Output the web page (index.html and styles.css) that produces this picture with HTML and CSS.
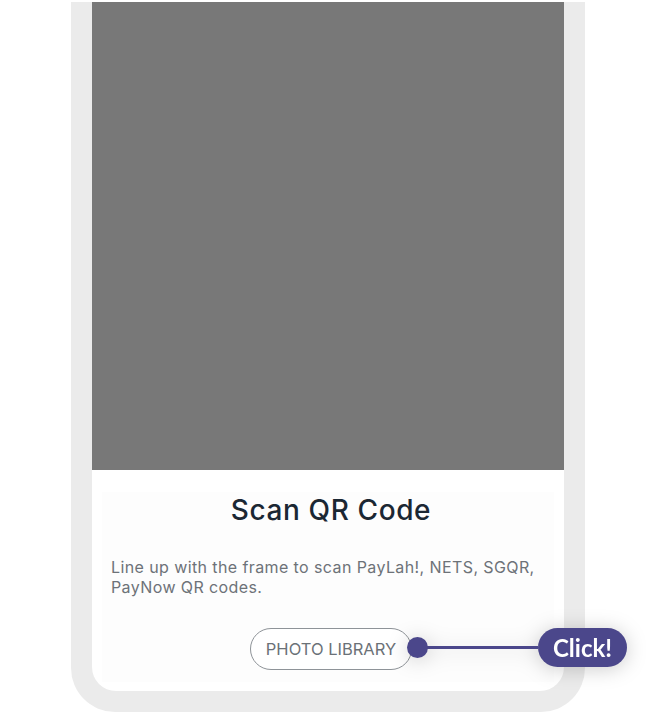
FILE: index.html
```html
<!DOCTYPE html>
<html lang="en">
<head>
  <meta charset="UTF-8">
  <title>Scan QR Code</title>
  <link rel="stylesheet" href="styles.css">
</head>
<body>
  <div class="phone">
    <div class="screen">
      <div class="camera"></div>
      <div class="panel">
        <div class="card">
          <h1 class="title">Scan QR Code</h1>
          <p class="hint">Line up with the frame to scan PayLah!, NETS, SGQR, PayNow QR codes.</p>
          <div class="actions">
            <button class="library">PHOTO LIBRARY</button>
          </div>
        </div>
      </div>
    </div>
  </div>

  <div class="callout">
    <span class="dot"></span>
    <span class="line"></span>
    <span class="tag">Click!</span>
  </div>
</body>
</html>
```

FILE: styles.css
```css
body {
  margin: 0;
  background-color: white;
  font-family: Inter, "Noto Sans", sans-serif;
}

.phone {
  width: 472px;
  margin: 2px 0 0 71px;
  padding: 0 21px 21px;
  background-color: #ebebeb;
  border-radius: 0 0 44px 44px;
}

.screen {
  background-color: white;
  border-radius: 0 0 24px 24px;
  overflow: hidden;
}

.camera {
  height: 468px;
  background-color: #787878;
}

.panel {
  height: 221px;
  padding: 22px 10px 0;
  box-sizing: border-box;
}

.card {
  height: 190px;
  background-color: #fdfdfd;
  padding: 0 9px;
}

.title {
  margin: 0;
  padding-left: 6px;
  font-size: 28px;
  line-height: 36px;
  font-weight: 500;
  letter-spacing: 0.6px;
  color: #1b2733;
  text-align: center;
}

.hint {
  margin: 29px 0 0;
  font-size: 16px;
  line-height: 20px;
  letter-spacing: 0.4px;
  color: #6d7278;
}

.actions {
  display: flex;
  justify-content: center;
  margin-top: 31px;
  padding-left: 6px;
}

.library {
  width: 162px;
  height: 42px;
  border: 1.5px solid #8e9398;
  border-radius: 21px;
  background-color: white;
  font-family: Inter, "Noto Sans", sans-serif;
  font-size: 16.5px;
  color: #6b7177;
}

/* annotation over the screen */
.callout {
  position: absolute;
  left: 407px;
  top: 628px;
  display: flex;
  align-items: center;
  filter: drop-shadow(0 2px 10px rgba(0, 0, 0, 0.2));
}

.dot {
  width: 21px;
  height: 21px;
  border-radius: 50%;
  background-color: #4b478b;
}

.line {
  width: 112px;
  height: 3px;
  margin-left: -2px;
  background-color: #4b478b;
}

.tag {
  width: 89px;
  height: 39px;
  border-radius: 20px;
  background-color: #4b478b;
  color: white;
  font-family: Lato, sans-serif;
  font-weight: bold;
  font-size: 24px;
  display: flex;
  align-items: center;
  justify-content: center;
}
```
